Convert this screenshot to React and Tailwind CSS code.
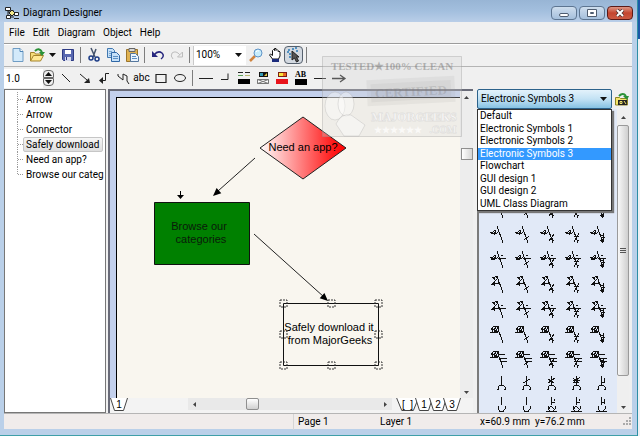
import { useState } from 'react';
import clsx from 'clsx';

const MENUS = ['File', 'Edit', 'Diagram', 'Object', 'Help'];
const OBJECTS = ['Arrow', 'Arrow', 'Connector', 'Safely download', 'Need an app?', 'Browse our categ'];
const PALETTES = [
  'Default',
  'Electronic Symbols 1',
  'Electronic Symbols 2',
  'Electronic Symbols 3',
  'Flowchart',
  'GUI design 1',
  'GUI design 2',
  'UML Class Diagram',
];

// parts that the electronic symbols are put together from
const ZIG = 'M4 10h3l2-2 1 4 2-2M8 10v3M5 11h4';
const TWO = 'M6 5h3M9 4l3 2-5 5h5v-4M5 12h3M8 10v4M7 5l2 3';
const COIL = 'M5 8l3-4h4v5H8V6M4 10h8M9 4l2 6M6 7l5 2M6 6v4';
const CROSS = 'M5 12h3M12 11h8M15 8h2';
const BARS = 'M13 7h6M14 11h7M14 14h7';
const STEM = 'M11 4l6 17';
const TAILS = ['', 'M13 18l5-4', 'M13 19l5-7M14 14l4 5', 'M13 20l5-9M13 14l5 1M14 17l4 2', 'M14 13h4M15 15h4M14 18l4 1M17 11v9M18 16l-3 4'];
const POST = 'M15 4v9';
const ARC = 'M12 17v-2l2-2h3l2 2v2M11 17h2M18 17h2';
const BASE = 'M15 0v8M12 9v3l2 2h3l2-2V9M13 14h5';
const POST_TAILS = ['', 'M12 11l7-4', 'M12 11l7-5M12 7l6 4', 'M12 11l7-6M12 6l6 5M12 8h7M12 10h6', 'M18 6v2M16 10h3M18 8v3'];
const BASE_TAILS = ['', '', 'M18 2v2M16 5h3M12 13l3-4 4 4M10 14h11', 'M18 2v2M16 5h3M12 13l3-4 4 4M10 14h11', 'M18 2v2M16 5h3M18 4v3M10 14h11'];

const SYMBOL_ROWS = [
  { body: ZIG + STEM, tails: TAILS },
  { body: TWO + STEM, tails: TAILS },
  { body: COIL + STEM, tails: TAILS },
  { body: ZIG + STEM, tails: TAILS },
  { body: ZIG + STEM, tails: TAILS },
  { body: ZIG + CROSS + STEM, tails: TAILS },
  { body: TWO + STEM, tails: TAILS },
  { body: TWO + CROSS + STEM, tails: TAILS },
  { body: COIL + STEM, tails: TAILS },
  { body: COIL + BARS + STEM, tails: TAILS },
  { body: POST + ARC, tails: POST_TAILS },
  { body: BASE, tails: BASE_TAILS },
];

const Icon = ({ children }) => (
  <svg width="16" height="16" viewBox="0 0 16 16" fill="none" stroke="#222" className="shrink-0">
    {children}
  </svg>
);

const ToolButton = ({ label, children, pressed }) => (
  <button
    title={label}
    aria-label={label}
    aria-pressed={pressed}
    className={clsx(
      'flex h-[18px] w-[19px] shrink-0 items-center justify-center',
      pressed && 'rounded-sm border border-[#56616e] bg-[#d3d9e0]'
    )}
  >
    {children}
  </button>
);

const Separator = () => <div className="mx-[3px] h-4 w-px shrink-0 bg-[#7d7d7d]" />;

const Caret = ({ className }) => (
  <svg width="7" height="4" viewBox="0 0 7 4" className={clsx('pointer-events-none shrink-0', className)}>
    <path d="M0 0h7L3.5 4z" fill="#111" />
  </svg>
);

const TitleBar = () => (
  <header className="flex h-[22px] items-center gap-1 bg-linear-to-b from-[#98b5d5] via-[#a3bfde] to-[#b9cee8] pt-1 pr-1 pl-[5px]">
    <svg width="14" height="14" viewBox="0 0 14 14" fill="#fff" stroke="#222">
      <path d="M3 3v8M3 6h4M5 11h4M8 4v5" fill="none" />
      <path d="M.5 1.5h5v3h-5zM9.5 6.5h4v3h-4zM1.5 9.5h4v3h-4z" />
      <path d="M7 4l3 3-3 3-3-3z" fill="#f3e88a" />
      <path d="M9 12.5h5" />
    </svg>
    <h1 className="flex-1">Diagram Designer</h1>
    <div className="flex gap-[2px]">
      <button aria-label="Minimize" className="flex h-[14px] w-[26px] items-center justify-center rounded-sm border border-[#5d7591] bg-linear-to-b from-[#cfdeee] to-[#a5bfdc]">
        <span className="mt-1 h-1 w-[10px] rounded-xs border border-[#4f5d70] bg-white" />
      </button>
      <button aria-label="Maximize" className="flex h-[14px] w-[26px] items-center justify-center rounded-sm border border-[#5d7591] bg-linear-to-b from-[#cfdeee] to-[#a5bfdc]">
        <svg width="10" height="8" viewBox="0 0 10 8" fill="#fff" stroke="#4f5d70">
          <path d="M.5.5h9v7h-9z" />
          <path d="M3.5 3.5h3v1h-3z" />
        </svg>
      </button>
      <button aria-label="Close" className="flex h-[14px] w-[26px] items-center justify-center rounded-sm border border-[#5c1a17] bg-linear-to-b from-[#dd9484] via-[#c4452f] to-[#cc5a43]">
        <svg width="10" height="8" viewBox="0 0 10 8">
          <path d="M2 1l6 6M8 1L2 7" stroke="#4a3030" strokeWidth="3.5" />
          <path d="M2 1l6 6M8 1L2 7" stroke="#fff" strokeWidth="2" />
        </svg>
      </button>
    </div>
  </header>
);

const MainToolbar = () => (
  <div role="toolbar" aria-label="Standard" className="flex h-[23px] items-center border-b border-[#b4b4b4] pl-1 shadow-[inset_0_1px_0_#fff]">
    <ToolButton label="New">
      <Icon>
        <path d="M3 1.5h7l3 3v10H3z" fill="#d3eafb" stroke="#6f9cc4" />
        <path d="M10 1.5v3h3" fill="#fff" stroke="#4f86b8" />
      </Icon>
    </ToolButton>
    <ToolButton label="Open">
      <Icon>
        <path d="M1.5 14V5.5h4l1 1.5h5v2" fill="#f5dc7a" stroke="#a5832b" />
        <path d="M1.5 14l3-5.5h10l-3 5.5z" fill="#ffe995" stroke="#a5832b" />
        <path d="M6 4q4-4 7 1" stroke="#2a9137" strokeWidth="2" />
        <path d="M10 5h6l-3 4z" fill="#2a9137" stroke="none" />
      </Icon>
    </ToolButton>
    <button aria-label="Recent files" className="flex h-[18px] w-3 items-center justify-center">
      <Caret />
    </button>
    <ToolButton label="Save">
      <Icon>
        <path d="M2.5 2.5h11v11h-10l-1-1z" fill="#5968b0" stroke="#2d3a84" />
        <path d="M5 3h6v4H5z" fill="#fff" stroke="none" />
        <path d="M5 10h6v4H5z" fill="#d6daee" stroke="none" />
        <path d="M6.5 10v3" stroke="#2d3a84" />
      </Icon>
    </ToolButton>
    <Separator />
    <ToolButton label="Cut">
      <Icon>
        <path d="M5 1l4 9M10 2L7 10" stroke="#44536c" strokeWidth="1.5" />
        <circle cx="5" cy="11" r="2" stroke="#1b3b86" strokeWidth="1.5" />
        <circle cx="11" cy="12" r="2" stroke="#1b3b86" strokeWidth="1.5" />
      </Icon>
    </ToolButton>
    <ToolButton label="Copy">
      <Icon>
        <path d="M2.5 1.5h5l2 2v7h-7z" fill="#c5e0f8" stroke="#4178b0" />
        <path d="M4 4.5h3M4 6.5h3M4 8.5h2" stroke="#78a5d0" />
        <path d="M6.5 5.5h5l3 3v6h-8z" fill="#c5e0f8" stroke="#2f67a6" />
        <path d="M8 9.5h5M8 11.5h5" stroke="#5b8fc4" />
      </Icon>
    </ToolButton>
    <ToolButton label="Paste">
      <Icon>
        <path d="M2.5 2.5h11v12h-11z" fill="#e0b251" stroke="#9b742a" />
        <path d="M5 1.5h6v3H5z" fill="#d9d9d9" stroke="#666" />
        <path d="M6.5 6.5h5l3 3v5h-8z" fill="#eaf3fc" stroke="#55779e" />
        <path d="M8 9.5h4M8 11.5h5" stroke="#5b8fc4" />
      </Icon>
    </ToolButton>
    <Separator />
    <ToolButton label="Undo">
      <Icon>
        <path d="M4 8q4-5 8-2 3 3-1 6" stroke="#26267e" strokeWidth="1.5" />
        <path d="M2 4v6h6z" fill="#26267e" stroke="none" />
      </Icon>
    </ToolButton>
    <ToolButton label="Redo">
      <Icon>
        <path d="M11 8Q7 3 3 6q-2 3 1 6" stroke="#bdbdbd" />
        <path d="M13.5 5v5h-5z" fill="#eee" stroke="#bdbdbd" />
      </Icon>
    </ToolButton>
    <Separator />
    <div className="relative flex h-[19px] items-center">
      <select aria-label="Zoom" defaultValue="100%" className="h-full w-[53px] appearance-none border-l border-[#c9c9c9] bg-white pl-[2px]">
        <option>50%</option>
        <option>100%</option>
        <option>200%</option>
      </select>
      <Caret className="absolute right-1" />
    </div>
    <ToolButton label="Zoom tool">
      <Icon>
        <path d="M7 9l-5 5" stroke="#d0843e" strokeWidth="2.5" />
        <circle cx="10" cy="6" r="4" fill="#c7ecfb" stroke="#5f93c6" />
        <path d="M8 5q1-2 3-1" stroke="#fff" />
      </Icon>
    </ToolButton>
    <ToolButton label="Pan">
      <Icon>
        <path d="M5.5 12L2.5 8l1-1 2 1.500V3.5l1-1 1 1v-2h1.500v2l1-1 1 1v1l1-.5 1 1V9l-1.500 3z" fill="#fff" stroke="#111" />
        <path d="M5 12h7v3H5z" fill="#1c2b7c" stroke="none" />
      </Icon>
    </ToolButton>
    <ToolButton label="Select" pressed>
      <Icon>
        <path d="M2 3h2M6 2h2M10 4h2M3 7h2M1 5h2M9 1h2M3 10h2" stroke="#2b79b5" strokeWidth="1.5" />
        <path d="M6 4v9l2.500-2 2 4 2-1-2-4H13z" fill="#555" stroke="#222" />
      </Icon>
    </ToolButton>
    <Separator />
  </div>
);

const DrawToolbar = () => (
  <div role="toolbar" aria-label="Drawing" className="flex h-[22px] items-center">
    <input aria-label="Line width" defaultValue="1.0" className="h-[19px] w-[39px] bg-white pl-[2px]" />
    <div className="mr-[2px] flex flex-col">
      <button aria-label="Increase" className="flex h-2 w-[11px] items-center justify-center rounded-t-sm border border-[#666] bg-[#eee]">
        <Caret className="rotate-180" />
      </button>
      <button aria-label="Decrease" className="flex h-2 w-[11px] items-center justify-center rounded-b-sm border border-[#666] bg-[#eee]">
        <Caret />
      </button>
    </div>
    <ToolButton label="Line">
      <Icon><path d="M4 4l8 8" /></Icon>
    </ToolButton>
    <ToolButton label="Arrow">
      <Icon>
        <path d="M3 4l7 6" />
        <path d="M13 13H7l5-5z" fill="#222" stroke="none" />
      </Icon>
    </ToolButton>
    <ToolButton label="Connector">
      <Icon>
        <path d="M13 3.5H9.5v7H6" />
        <path d="M7 7v7l-4-3.5z" fill="#222" stroke="none" />
      </Icon>
    </ToolButton>
    <ToolButton label="Curve">
      <Icon><path d="M3 4v2l5 4V4l4 2v5l2 3" /></Icon>
    </ToolButton>
    <ToolButton label="Text">abc</ToolButton>
    <ToolButton label="Rectangle">
      <Icon><path d="M3 4.5h10v8H3z" strokeWidth="1.2" /></Icon>
    </ToolButton>
    <ToolButton label="Ellipse">
      <Icon><ellipse cx="8" cy="8" rx="5.5" ry="3.5" /></Icon>
    </ToolButton>
    <Separator />
    <ToolButton label="Straight line">
      <Icon><path d="M1 8.5h14" /></Icon>
    </ToolButton>
    <ToolButton label="Corner">
      <Icon><path d="M4 9.5h7v-6" /></Icon>
    </ToolButton>
    <ToolButton label="Line color">
      <Icon>
        <path d="M2 2.5h5M9 2.5h5" />
        <path d="M2 5.5h5" stroke="#5aa05a" />
        <path d="M9 5.5h5" stroke="#b9b970" />
        <path d="M2 9h12v5H2z" fill="#000" stroke="none" />
      </Icon>
    </ToolButton>
    <ToolButton label="Fill pattern">
      <Icon>
        <path d="M4 2h9v5H4z" fill="#111" stroke="none" />
        <path d="M5 3h3v3H5z" fill="#319bb5" stroke="none" />
        <path d="M9 6l3-3v3z" fill="#e0c845" stroke="none" />
        <path d="M2.5 9.5h11v4h-11zM2.5 9.5l11 4M13.5 9.5l-11 4" fill="#fff" stroke="#777" />
      </Icon>
    </ToolButton>
    <ToolButton label="Fill color">
      <Icon>
        <path d="M4 2h9v5H4z" fill="#7c1d12" stroke="none" />
        <path d="M5 3h4v3H5z" fill="#f7e53b" stroke="none" />
        <path d="M9 3h3v3H9z" fill="#ec6a22" stroke="none" />
        <path d="M2 9h12v5H2z" fill="#e8131b" stroke="none" />
      </Icon>
    </ToolButton>
    <ToolButton label="Text color">
      <span className="flex flex-col items-center font-['Liberation_Serif',serif] text-[8px] leading-[7px] font-bold">
        AB
        <span className="mt-px h-[6px] w-3 bg-black" />
      </span>
    </ToolButton>
    <ToolButton label="Line start">
      <Icon><path d="M2 8.5h12" /></Icon>
    </ToolButton>
    <ToolButton label="Line end">
      <Icon><path d="M1 8.5h13M9 5l5 3.5L9 12" strokeWidth="1.3" /></Icon>
    </ToolButton>
  </div>
);

const ObjectTree = () => (
  <nav className="w-[102px] shrink-0 overflow-hidden border border-[#777] bg-white pt-[2px]">
    <ul>
      {OBJECTS.map((name, i) => (
        <li key={i} className="flex h-[15px] items-center pl-3">
          <span className={clsx('w-[6px] shrink-0 self-stretch border-l border-dotted border-[#999]', i === OBJECTS.length - 1 && 'mb-2')}>
            <span className="mt-[7px] block border-t border-dotted border-[#999]" />
          </span>
          <button
            className={clsx(
              'h-[15px] w-[80px] shrink-0 rounded-xs border px-[2px] text-left leading-[13px] whitespace-nowrap',
              i === 3 ? 'border-[#c6c6c6] bg-linear-to-b from-[#f6f6f6] to-[#dedede]' : 'border-transparent'
            )}
          >
            {name}
          </button>
        </li>
      ))}
    </ul>
  </nav>
);

const ArrowHead = ({ x, y, angle }) => (
  <path d="M0 0l-8 3.500v-7z" fill="#000" transform={`translate(${x} ${y}) rotate(${angle})`} />
);

const HANDLES = [
  [166, 205], [214, 205], [261, 205],
  [166, 236], [261, 236],
  [166, 267], [214, 267], [261, 267],
];

const Diagram = () => (
  <svg className="absolute inset-0 h-full w-full font-['Liberation_Sans',sans-serif] text-[11px]" textAnchor="middle">
    <defs>
      <linearGradient id="red">
        <stop offset="0" stopColor="#fff" />
        <stop offset="0.85" stopColor="#ff1a1a" />
        <stop offset="1" stopColor="#ff0000" />
      </linearGradient>
    </defs>
    <path d="M143 50l43-31 43 31-43 31z" fill="url(#red)" stroke="#222" />
    <text x="186" y="53">Need an app?</text>

    <path d="M63.5 93v5" stroke="#000" />
    <path d="M60 97h7l-3.500 4z" />
    <path d="M138 60L101 93M137 136l70 63" stroke="#222" fill="none" />
    <ArrowHead x={96} y={98} angle={138} />
    <ArrowHead x={211} y={203} angle={42} />

    <path d="M37.5 104.5h95v62h-95z" fill="#008000" stroke="#111" />
    <g fill="#0a1a0a">
      <text x="82" y="132">Browse our</text>
      <text x="84" y="145">categories</text>
    </g>

    <path d="M166.5 205.5h95v62h-95z" fill="none" stroke="#111" />
    <text x="212" y="233">Safely download it</text>
    <text x="213" y="246">from MajorGeeks</text>
    {HANDLES.map(([x, y]) => (
      <rect key={`${x}-${y}`} x={x - 3} y={y - 3} width="7" height="7" fill="none" stroke="#333" strokeDasharray="2 1" />
    ))}
  </svg>
);

const ScrollArrow = ({ label, className }) => (
  <button aria-label={label} className="flex h-3 w-3 shrink-0 items-center justify-center">
    <svg width="5" height="3" viewBox="0 0 5 3" className={className}>
      <path d="M0 0h5L2.500 3z" fill="#444" />
    </svg>
  </button>
);

const SheetTab = ({ children }) => (
  <button className="relative -mr-1 flex h-[14px] min-w-[18px] items-center justify-center px-1 font-['Liberation_Sans',sans-serif] leading-3">
    <svg className="absolute inset-0 h-full w-full" viewBox="0 0 18 14" preserveAspectRatio="none" fill="#fff" stroke="#444">
      <path d="M.5 0l4 12.500h9l4-12.500" vectorEffect="non-scaling-stroke" />
    </svg>
    <span className="relative">{children}</span>
  </button>
);

const Canvas = () => (
  <main className="mr-1 ml-[2px] flex min-w-0 flex-1 flex-col border-t-2 border-l-2 border-[#696b78] bg-[#f3f3f3]">
    <div className="flex min-h-0 flex-1">
      <div className="flex min-w-0 flex-1 bg-[#c3d0ec] pt-[6px] pl-[6px]">
        <div className="relative flex-1 overflow-hidden border-t border-l border-black bg-[#f9f6ef]">
          <Diagram />
        </div>
      </div>
      <div className="flex w-[13px] flex-col items-center bg-[#ededed]">
        <ScrollArrow label="Scroll up" className="rotate-180" />
        <div className="flex-1" />
        <div className="h-3 w-3 border border-[#8f8f8f] bg-linear-to-r from-white to-[#d5d5d5]" />
        <div className="flex-5" />
        <ScrollArrow label="Scroll down" />
      </div>
    </div>
    <div className="flex h-[15px] items-start pr-4">
      <SheetTab>1</SheetTab>
      <div className="w-16" />
      <div className="flex h-3 flex-1 items-center bg-[#e9e9e9]">
        <ScrollArrow label="Scroll left" className="rotate-90" />
        <div className="flex-3" />
        <div className="h-3 w-[13px] rounded-xs border border-[#8f8f8f] bg-linear-to-b from-white to-[#d0d0d0]" />
        <div className="flex-8" />
        <ScrollArrow label="Scroll right" className="-rotate-90" />
      </div>
      <div className="ml-1 flex">
        <SheetTab><span className="px-[2px] whitespace-pre">[ &nbsp;]</span></SheetTab>
        <SheetTab>1</SheetTab>
        <SheetTab>2</SheetTab>
        <SheetTab>3</SheetTab>
      </div>
    </div>
  </main>
);

const PalettePanel = ({ palette, setPalette }) => (
  <aside className="flex w-[155px] shrink-0 flex-col">
    <div className="relative flex h-5 shrink-0 items-center">
      <select
        aria-label="Template palette"
        value={palette}
        onChange={(e) => setPalette(e.target.value)}
        className="h-5 w-[135px] appearance-none rounded-xs border border-[#2c628b] bg-linear-to-b from-[#e3f2fb] via-[#c3e2f4] to-[#86c2e3] pl-[3px]"
      >
        {PALETTES.map((name) => (
          <option key={name}>{name}</option>
        ))}
      </select>
      <Caret className="absolute left-[123px]" />
      <button aria-label="Open palette" className="ml-[1px] flex h-[18px] w-[18px] items-center justify-center">
        <Icon>
          <path d="M1.5 14V6.5h4l1 1h7V14z" fill="#f4e56b" stroke="#8f8426" />
          <path d="M4 9h9v5H4z" fill="#222" stroke="none" />
          <path d="M6 10.5h2v2H6zM10 10l2 3" stroke="#f4e56b" />
          <path d="M5 5q4-4 7 0" stroke="#2a9137" strokeWidth="2" />
          <path d="M9 5h6l-2 4z" fill="#2a9137" stroke="none" />
        </Icon>
      </button>
      <ul
        role="listbox"
        aria-label="Palettes"
        className="absolute top-5 left-0 z-10 flex h-[102px] w-[135px] flex-col border border-[#333] bg-white shadow-[2px_2px_1px_#777]"
      >
        {PALETTES.map((name) => (
          <li
            key={name}
            role="option"
            aria-selected={name === palette}
            onClick={() => setPalette(name)}
            className={clsx('flex-1 pl-[2px] leading-3', name === palette && 'bg-[#3399ff] text-white')}
          >
            {name}
          </li>
        ))}
      </ul>
    </div>
    <div className="flex min-h-0 flex-1 border-l-2 border-[#7b7b7b]">
      <div className="flex-1 overflow-hidden bg-[#e1e9f7] pt-[13px] pl-[7px]">
        <div className="grid grid-cols-[repeat(5,25px)]">
          {SYMBOL_ROWS.map((row, r) =>
            row.tails.map((tail, c) => (
              <svg key={`${r}-${c}`} width="25" height="25" viewBox="0 0 25 25" fill="none" stroke="#111" shapeRendering="crispEdges">
                <path d={row.body + tail} />
              </svg>
            ))
          )}
        </div>
      </div>
      <div className="mr-[3px] flex w-3 flex-col items-center bg-[#efefef] pt-[2px]">
        <ScrollArrow label="Scroll up" className="rotate-180" />
        <div className="mt-[2px] flex w-full flex-10 flex-col items-center justify-center gap-[1px] rounded-xs border border-[#9a9a9a] bg-linear-to-r from-[#f8f8f8] to-[#cfcfcf]">
          <span className="h-px w-[6px] bg-[#555]" />
          <span className="h-px w-[6px] bg-[#555]" />
          <span className="h-px w-[6px] bg-[#555]" />
        </div>
        <div className="flex-1" />
        <ScrollArrow label="Scroll down" />
      </div>
    </div>
  </aside>
);

const Watermark = () => (
  <svg
    className="pointer-events-none absolute top-[56px] left-[322px] font-['Liberation_Serif',serif] font-bold"
    width="140"
    height="81"
    viewBox="0 0 140 81"
    textAnchor="middle"
  >
    <path d="M.5.5h139v80H.5z" fill="#d8d8d8" fillOpacity="0.3" stroke="#999" strokeOpacity="0.35" />
    <text x="70" y="14" fontSize="11" fill="#777" fillOpacity="0.5">TESTED★100% CLEAN</text>
    <g fill="#999" fillOpacity="0.12" transform="rotate(-3 90 36)">
      <path d="M45 22h88v26H45z" />
      <path d="M49 26h80v18H49z" />
      <text x="89" y="40" fontSize="13" fill="#777" fillOpacity="0.25">CERTIFIED</text>
    </g>
    <g fill="#fff" fillOpacity="0.4" stroke="#999" strokeOpacity="0.25">
      <ellipse cx="13" cy="50" rx="10" ry="14" />
      <ellipse cx="24" cy="48" rx="8" ry="12" />
      <path d="M14 68q5-11 15-9l14 10-6 11H22z" />
    </g>
    <text x="92" y="65" fontSize="12" fill="#fff" fillOpacity="0.9" stroke="#aaa" strokeOpacity="0.25">MAJORGEEKS</text>
    <text x="76" y="77" fontSize="9" fill="#fff" fillOpacity="0.7">★★★★★★</text>
    <text x="121" y="77" fontSize="10" fill="#fff" fillOpacity="0.9" stroke="#aaa" strokeOpacity="0.25">.COM</text>
  </svg>
);

export default function App() {
  const [palette, setPalette] = useState('Electronic Symbols 3');

  return (
    <div className="relative flex h-screen cursor-default bg-[#dfe7ef] font-['Roboto','Open_Sans',sans-serif] text-[10px] leading-4 text-black">
      <div className="flex min-w-0 flex-1 flex-col border-b border-[#3f9fa8] bg-[#bad0e9]">
        <TitleBar />
        <div className="mr-[5px] mb-[6px] ml-1 flex min-h-0 flex-1 flex-col bg-[#f0f0f0]">
          <nav className="flex h-[22px] items-center gap-2 border-b border-[#9c9c9c] pl-[5px]">
            {MENUS.map((menu) => (
              <button key={menu}>{menu}</button>
            ))}
          </nav>
          <MainToolbar />
          <DrawToolbar />
          <div className="flex min-h-0 flex-1">
            <ObjectTree />
            <Canvas />
            <PalettePanel palette={palette} setPalette={setPalette} />
          </div>
          <footer className="flex h-4 shrink-0 items-center border-t border-[#b5b5b5] bg-[#f0eceb]">
            <div className="flex-1" />
            <div className="w-[87px] border-l border-[#d5d5d5] pl-1">Page 1</div>
            <div className="w-[100px]">Layer 1</div>
            <div className="flex w-[152px] items-center justify-between">
              <span className="whitespace-pre">x=60.9 mm  y=76.2 mm</span>
              <svg width="9" height="9" viewBox="0 0 9 9" fill="#aaa">
                <path d="M6 0h2v2H6zM3 3h2v2H3zM6 3h2v2H6zM0 6h2v2H0zM3 6h2v2H3zM6 6h2v2H6z" />
              </svg>
            </div>
          </footer>
        </div>
      </div>
      <div className="flex w-[3px] shrink-0 flex-col border-l border-[#2d8ea5]">
        <div className="h-[39px] bg-[#1c58a8]" />
        <div className="flex-1 bg-[#eef1f4]" />
      </div>
      <Watermark />
    </div>
  );
}
